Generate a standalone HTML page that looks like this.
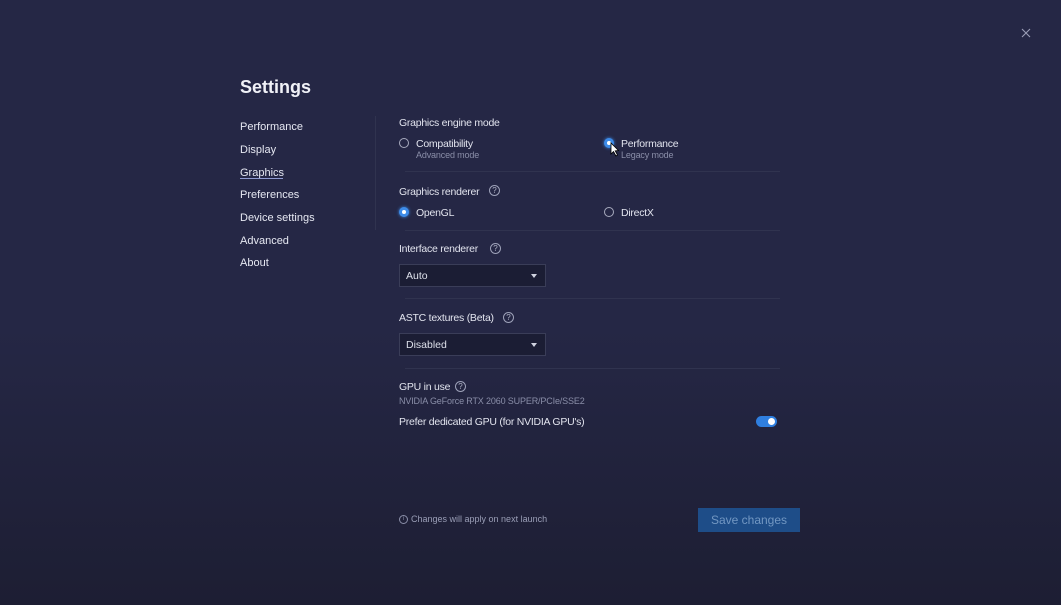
<!DOCTYPE html>
<html><head><meta charset="utf-8"><style>
*{margin:0;padding:0;box-sizing:border-box}
html,body{width:1061px;height:605px;overflow:hidden}
body{background:linear-gradient(180deg,#252745 0px,#252745 330px,#1d1e33 605px);font-family:"Liberation Sans",sans-serif;color:#e4e6f0;position:relative}
.a{position:absolute;white-space:nowrap}
.t{font-size:10.5px;letter-spacing:-0.25px;color:#e2e4ee}
.s{font-size:9px;letter-spacing:-0.15px;color:#8a8ea8}
.nav{font-size:11px;color:#e6e8f2}
.hr{position:absolute;height:1px;background:#30334f}
.radio{position:absolute;width:10px;height:10px;border-radius:50%;border:1px solid #a8abbe}
.radio.on{border:none;background:#3d8be8;box-shadow:0 0 3px #3d8be8}
.radio.on::after{content:"";position:absolute;left:3px;top:3px;width:4px;height:4px;border-radius:50%;background:#fff}
.q{position:absolute;width:11px;height:11px;border:1px solid #9da1b8;border-radius:50%;font-size:8px;line-height:9px;text-align:center;color:#b0b3c6}
.dd{position:absolute;width:147px;height:23px;background:#1b1d34;border:1px solid #3a3d58;font-size:10.5px;color:#dde0ea;padding:5px 0 0 6px}
.dd::after{content:"";position:absolute;right:8px;top:9px;border-left:3.5px solid transparent;border-right:3.5px solid transparent;border-top:4px solid #d0d3e0}
</style></head><body>
<svg class="a" style="left:1021px;top:28px" width="10" height="10"><path d="M1 1L9 9M9 1L1 9" stroke="#9a9db6" stroke-width="1.1"/></svg>
<div class="a" style="left:240px;top:77px;font-size:18px;font-weight:bold;color:#f0f1f7">Settings</div>
<div class="a nav" style="left:240px;top:121px">Performance</div>
<div class="a nav" style="left:240px;top:144px">Display</div>
<div class="a nav" style="left:240px;top:167px">Graphics</div>
<div class="a" style="left:240px;top:178px;width:43px;height:1px;background:#8f9ad0"></div>
<div class="a nav" style="left:240px;top:189px">Preferences</div>
<div class="a nav" style="left:240px;top:212px">Device settings</div>
<div class="a nav" style="left:240px;top:235px">Advanced</div>
<div class="a nav" style="left:240px;top:257px">About</div>
<div class="a" style="left:375px;top:116px;width:1px;height:114px;background:#30334f"></div>

<div class="a t" style="left:399px;top:117px">Graphics engine mode</div>
<div class="radio" style="left:399px;top:138px"></div>
<div class="a t" style="left:416px;top:138px">Compatibility</div>
<div class="a s" style="left:416px;top:150px">Advanced mode</div>
<div class="radio on" style="left:604px;top:138px"></div>
<div class="a t" style="left:621px;top:138px">Performance</div>
<div class="a s" style="left:621px;top:150px">Legacy mode</div>
<svg class="a" style="left:610px;top:142px" width="10" height="15"><path d="M1 1L1 12L3.5 9.5L6 14L7.5 13L5.2 8.8L8.5 8.5Z" fill="#fff" stroke="#000" stroke-width=".8"/></svg>
<div class="hr" style="left:405px;top:171px;width:375px"></div>

<div class="a t" style="left:399px;top:186px">Graphics renderer</div>
<div class="q" style="left:489px;top:185px">?</div>
<div class="radio on" style="left:399px;top:207px"></div>
<div class="a t" style="left:416px;top:207px">OpenGL</div>
<div class="radio" style="left:604px;top:207px"></div>
<div class="a t" style="left:621px;top:207px">DirectX</div>
<div class="hr" style="left:405px;top:230px;width:375px"></div>

<div class="a t" style="left:399px;top:243px">Interface renderer</div>
<div class="q" style="left:490px;top:243px">?</div>
<div class="dd" style="left:399px;top:264px">Auto</div>
<div class="hr" style="left:405px;top:298px;width:375px"></div>

<div class="a t" style="left:399px;top:312px">ASTC textures (Beta)</div>
<div class="q" style="left:503px;top:312px">?</div>
<div class="dd" style="left:399px;top:333px">Disabled</div>
<div class="hr" style="left:405px;top:368px;width:375px"></div>

<div class="a t" style="left:399px;top:381px">GPU in use</div>
<div class="q" style="left:455px;top:381px">?</div>
<div class="a s" style="left:399px;top:396px">NVIDIA GeForce RTX 2060 SUPER/PCIe/SSE2</div>
<div class="a t" style="left:399px;top:416px">Prefer dedicated GPU (for NVIDIA GPU's)</div>
<div class="a" style="left:756px;top:416px;width:21px;height:11px;border-radius:6px;background:#2f7fe0"></div>
<div class="a" style="left:768px;top:418px;width:7px;height:7px;border-radius:50%;background:#fff"></div>

<div class="a" style="left:399px;top:515px;width:9px;height:9px;border:1px solid #8a8ea8;border-radius:50%;font-size:6px;line-height:7px;text-align:center;color:#8a8ea8">i</div>
<div class="a" style="left:411px;top:514px;font-size:9px;color:#9a9eb6">Changes will apply on next launch</div>
<div class="a" style="left:698px;top:508px;width:102px;height:24px;background:#1e4d88;color:#7297c2;font-size:12px;text-align:center;line-height:24px">Save changes</div>
</body></html>
